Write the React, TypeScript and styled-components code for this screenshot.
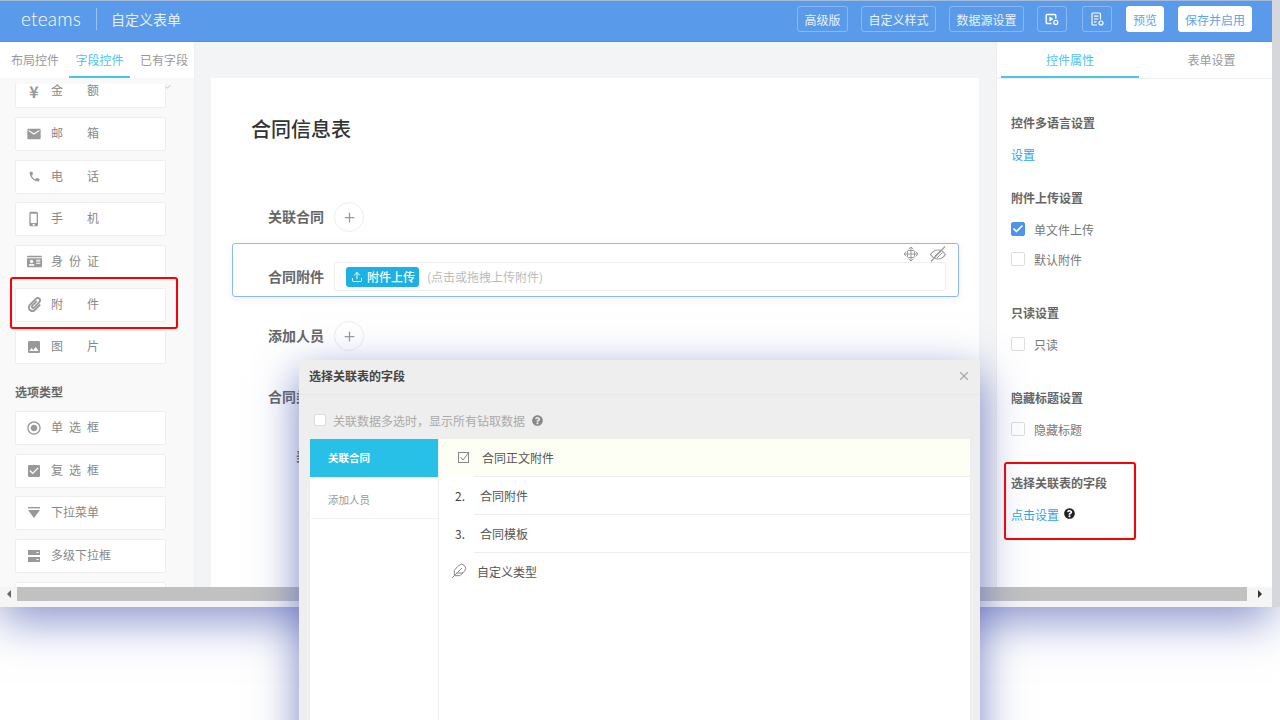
import React, { ReactElement, ReactNode } from 'react';
import styled, { createGlobalStyle } from 'styled-components';
import { FaIdCard, FaPaperclip, FaQuestionCircle } from 'react-icons/fa';
import {
  MdCheckBox,
  MdEmail,
  MdImage,
  MdPhone,
  MdPhoneIphone,
  MdRadioButtonChecked,
} from 'react-icons/md';
import { LuCheck, LuFeather, LuPlus, LuUpload, LuX } from 'react-icons/lu';

const GlobalStyle = createGlobalStyle`
  html, body {
    margin: 0;
    background: #fff;
  }
  * {
    box-sizing: border-box;
  }
  body {
    font-family: "Noto Sans CJK SC", "Noto Sans", sans-serif;
  }
`;

const Page = styled.div`
  position: relative;
  width: 1280px;
  height: 720px;
  overflow: hidden;
  background: #fff;
`;

const WindowFrame = styled.div`
  display: flex;
  height: 607px;
`;

const Main = styled.div`
  display: flex;
  flex-direction: column;
  width: 1272px;
  background: #fff;
  box-shadow: 0 14px 42px rgba(70, 85, 175, 0.62);
`;

const EdgeStrip = styled.div`
  position: relative;
  width: 8px;
  background: #d5d7dc;
`;

const Header = styled.header`
  display: flex;
  align-items: center;
  flex: none;
  height: 42px;
  padding: 0 20px 4px 21px;
  background: #5a9aea;
  border-top: 1px solid #a3bad8;
  border-bottom: 1px solid #4f90e6;
`;

const Logo = styled.div`
  width: 60px;
  font-family: Lato, sans-serif;
  font-size: 19px;
  font-weight: 300;
  line-height: 36px;
  letter-spacing: 0.2px;
  color: #fff;
`;

const HeaderDivider = styled.div`
  width: 1px;
  height: 22px;
  margin: 0 14px 0 15px;
  background: rgba(255, 255, 255, 0.4);
`;

const HeaderTitle = styled.div`
  flex: 1;
  font-size: 14px;
  color: #e6effb;
`;

const HeaderActions = styled.div`
  display: flex;
  gap: 13px;
`;

const HeaderButton = styled.button<{ $solid?: boolean; $width: number; $push?: number }>`
  display: flex;
  align-items: center;
  justify-content: center;
  width: ${(p) => p.$width}px;
  height: 26px;
  margin-left: ${(p) => p.$push ?? 0}px;
  padding: 0;
  font-family: inherit;
  font-size: 12px;
  color: ${(p) => (p.$solid ? '#62a3ee' : '#eaf2fc')};
  background: ${(p) => (p.$solid ? '#fff' : 'transparent')};
  border: 1px solid ${(p) => (p.$solid ? '#fff' : 'rgba(255, 255, 255, 0.3)')};
  border-radius: 3px;
`;

const Workspace = styled.div`
  display: flex;
  flex: 1;
  min-height: 0;
  overflow: hidden;
`;

const LeftPanel = styled.aside`
  display: flex;
  flex-direction: column;
  flex: none;
  width: 195px;
  background: #f9f9f9;
  border-right: 1px solid #f0f0f0;
`;

const TabBar = styled.div<{ $inset: number; $gap: number }>`
  display: flex;
  flex: none;
  gap: ${(p) => p.$gap}px;
  height: 36px;
  padding-left: ${(p) => p.$inset}px;
  background: #fff;
`;

const Tab = styled.div<{ $active?: boolean; $width: number }>`
  width: ${(p) => p.$width}px;
  height: 36px;
  font-size: 12px;
  line-height: 36px;
  text-align: center;
  color: ${(p) => (p.$active ? '#4cc6ee' : '#999')};
  border-bottom: 2px solid ${(p) => (p.$active ? '#45c6ea' : 'transparent')};
`;

const PlainTab = styled(Tab)`
  flex: 1;
  padding-left: 12px;
`;

const ControlScroller = styled.div`
  flex: 1;
  min-height: 0;
  margin-top: 6px;
  padding-left: 15px;
  overflow: hidden;
`;

const ControlList = styled.div`
  margin-top: -9.67px;
`;

const ControlCard = styled.div`
  position: relative;
  display: flex;
  align-items: center;
  gap: 9px;
  width: 151px;
  height: 34px;
  margin-bottom: 8.67px;
  padding-left: 10px;
  background: #fff;
  border: 1px solid #eee;
  border-radius: 2px;
`;

const ControlIcon = styled.span`
  display: flex;
  align-items: center;
  justify-content: center;
  width: 16px;
  font-size: 16px;
  line-height: 12px;
  color: #999;
`;

const YenMark = styled.span`
  font-weight: 700;
`;

const ControlName = styled.span`
  display: inline-block;
  min-width: 48px;
  padding-bottom: 2px;
  font-size: 12px;
  line-height: 12px;
  text-align-last: justify;
  color: #888;
`;

const CardTick = styled.span`
  position: absolute;
  top: 9px;
  right: -6px;
  display: flex;
  font-size: 6px;
  color: #888;
`;

const GroupTitle = styled.div`
  height: 38px;
  font-size: 12px;
  font-weight: 700;
  line-height: 38px;
  color: #666;
`;

const Highlight = styled.div<{ $top: number; $left: number; $width: number; $height: number }>`
  position: absolute;
  top: ${(p) => p.$top}px;
  left: ${(p) => p.$left}px;
  width: ${(p) => p.$width}px;
  height: ${(p) => p.$height}px;
  border: 2px solid #f00;
  border-radius: 3px;
`;

const Canvas = styled.main`
  flex: 1;
  min-width: 0;
  padding: 36px 17px 0 16px;
  background: #f3f4f6;
`;

const FormCard = styled.div`
  height: 700px;
  padding: 36px 20px 0 21px;
  background: #fff;
`;

const FormTitle = styled.h1`
  height: 30px;
  margin: 0 0 0 19px;
  font-size: 20px;
  font-weight: 500;
  line-height: 30px;
  color: #333;
`;

const FieldRow = styled.div<{ $top: number; $indent?: number }>`
  display: flex;
  align-items: center;
  gap: 10px;
  height: 30px;
  margin-top: ${(p) => p.$top}px;
  padding-left: ${(p) => 36 + (p.$indent ?? 0)}px;
`;

const FieldLabel = styled.div`
  flex: none;
  width: 56px;
  padding-bottom: 2px;
  font-size: 14px;
  font-weight: 700;
  line-height: 20px;
  white-space: nowrap;
  color: #666;
`;

const AddCircle = styled.div`
  display: flex;
  align-items: center;
  justify-content: center;
  width: 30px;
  height: 30px;
  font-size: 15px;
  color: #999;
  border: 1px solid #eee;
  border-radius: 50%;
`;

const SelectedField = styled.div`
  position: relative;
  display: flex;
  align-items: flex-start;
  gap: 10px;
  height: 54px;
  margin-top: 11px;
  padding: 18px 12px 0 35px;
  border: 1px solid #8db8f0;
  border-radius: 3px;
  box-shadow: 0 2px 8px rgba(120, 160, 220, 0.15);
`;

const SelectedLabel = styled(FieldLabel)`
  padding-bottom: 0;
  line-height: 29px;
`;

const FieldTools = styled.div`
  position: absolute;
  top: 0;
  right: 11px;
  display: flex;
  align-items: center;
  gap: 10px;
  height: 20px;
  color: #999;
`;

const UploadBox = styled.div`
  display: flex;
  align-items: center;
  flex: 1;
  height: 29px;
  padding-left: 11px;
  border: 1px solid #eee;
  border-radius: 2px;
`;

const UploadButton = styled.div`
  display: flex;
  align-items: center;
  gap: 4px;
  width: 73px;
  height: 20px;
  padding-left: 5px;
  font-size: 12px;
  font-weight: 500;
  color: #fff;
  background: #1cb0e4;
  border-radius: 3px;
`;

const UploadHint = styled.span`
  margin-left: 8px;
  font-size: 12px;
  color: #bbb;
`;

const RightPanel = styled.aside`
  flex: none;
  width: 276px;
  background: #fff;
  border-left: 1px solid #eee;
`;

const RightTabs = styled(TabBar)`
  height: 37px;
  border-bottom: 1px solid #eee;
`;

const PropertyList = styled.div`
  padding: 34px 0 0 14px;
`;

const PropertySection = styled.section<{ $top?: number }>`
  position: relative;
  margin-top: ${(p) => p.$top ?? 0}px;
`;

const PropertyHeading = styled.div`
  font-size: 12px;
  font-weight: 700;
  line-height: 20px;
  color: #666;
`;

const PropertyLink = styled.div`
  display: flex;
  align-items: center;
  gap: 5px;
  margin-top: 12px;
  font-size: 12px;
  line-height: 20px;
  color: #2ea4f0;
`;

const HelpIcon = styled.span<{ $color: string; $raise?: number }>`
  display: flex;
  margin-bottom: ${(p) => p.$raise ?? 0}px;
  font-size: 11px;
  color: ${(p) => p.$color};
`;

const CheckRow = styled.label<{ $top?: number }>`
  display: flex;
  align-items: center;
  gap: 9px;
  height: 20px;
  margin-top: ${(p) => p.$top ?? 12}px;
  padding-bottom: 2px;
  font-size: 12px;
  color: #777;
`;

const CheckBox = styled.span<{ $checked?: boolean; $size?: number }>`
  display: flex;
  align-items: center;
  justify-content: center;
  width: ${(p) => p.$size ?? 14}px;
  height: ${(p) => p.$size ?? 14}px;
  font-size: 12px;
  color: #fff;
  background: ${(p) => (p.$checked ? '#4d94ea' : '#fff')};
  border: 1px solid ${(p) => (p.$checked ? '#4d94ea' : '#ddd')};
  border-radius: 2px;
`;

const ScrollBar = styled.div`
  display: flex;
  flex: none;
  height: 20px;
  padding-bottom: 6px;
  background: #f5f5f5;
`;

const ScrollArrow = styled.div<{ $dir: 'left' | 'right' }>`
  display: flex;
  align-items: center;
  justify-content: center;
  width: ${(p) => (p.$dir === 'left' ? 17 : 25)}px;

  &::before {
    content: '';
    border-top: 4px solid transparent;
    border-bottom: 4px solid transparent;
    border-left: ${(p) => (p.$dir === 'right' ? '4px solid #333' : 'none')};
    border-right: ${(p) => (p.$dir === 'left' ? '4px solid #666' : 'none')};
  }
`;

const ScrollThumb = styled.div`
  flex: 1;
  background: #c1c1c1;
`;

const Modal = styled.div`
  position: absolute;
  top: 360px;
  left: 299px;
  width: 681px;
  height: 420px;
  background: #eee;
  box-shadow: 0 14px 40px rgba(70, 85, 175, 0.72);
`;

const ModalHeader = styled.div`
  display: flex;
  align-items: center;
  justify-content: space-between;
  height: 35px;
  padding: 0 9px 3px 10px;
  border-bottom: 1px solid #e8e8e8;
`;

const ModalTitle = styled.div`
  font-size: 12px;
  font-weight: 700;
  color: #444;
`;

const ModalClose = styled.span`
  display: flex;
  font-size: 14px;
  color: #aaa;
`;

const ModalOption = styled.div`
  display: flex;
  align-items: center;
  gap: 7px;
  height: 44px;
  padding: 6px 0 0 15px;
  font-size: 12px;
  color: #aaa;
`;

const ModalBody = styled.div`
  display: flex;
  margin: 0 10px 0 11px;
  height: 340px;
  background: #fff;
`;

const ModalNav = styled.div`
  flex: none;
  width: 129px;
  border-right: 1px solid #eee;
`;

const ModalNavItem = styled.div<{ $active?: boolean }>`
  height: ${(p) => (p.$active ? 38 : 42)}px;
  padding-left: 18px;
  font-size: 10.5px;
  font-weight: ${(p) => (p.$active ? 700 : 400)};
  line-height: ${(p) => (p.$active ? 38 : 46)}px;
  color: ${(p) => (p.$active ? '#fff' : '#999')};
  background: ${(p) => (p.$active ? '#29c0e8' : '#fff')};
  border-bottom: 1px solid ${(p) => (p.$active ? '#29c0e8' : '#f3f3f3')};
`;

const ModalFields = styled.div`
  flex: 1;
`;

const ModalRow = styled.div<{ $active?: boolean }>`
  display: flex;
  align-items: stretch;
  height: 38px;
  background: ${(p) => (p.$active ? '#fdfff5' : '#fff')};
`;

const RowMarker = styled.div<{ $pad: number }>`
  display: flex;
  align-items: center;
  flex: none;
  width: 35px;
  padding-bottom: 2px;
  padding-left: ${(p) => p.$pad}px;
  font-size: 12px;
  color: #444;
`;

const RowText = styled.div<{ $pad: number; $plain?: boolean }>`
  display: flex;
  align-items: center;
  flex: 1;
  padding-left: ${(p) => p.$pad}px;
  font-size: 12px;
  color: #555;
  border-bottom: 1px solid ${(p) => (p.$plain ? 'transparent' : '#eee')};
`;

const moveIcon = (
  <svg width="16" height="16" viewBox="0 0 16 16" fill="none" stroke="currentColor" strokeWidth="1">
    <path d="M8 1v14M1 8h14" />
    <path d="M5.6 3.2 8 1l2.4 2.2M5.6 12.8 8 15l2.4-2.2M3.2 5.6 1 8l2.2 2.4M12.8 5.6 15 8l-2.2 2.4" />
    <rect x="4.5" y="4.5" width="7" height="7" rx="1" />
  </svg>
);

const hiddenIcon = (
  <svg width="18" height="18" viewBox="0 0 18 18" fill="none" stroke="currentColor" strokeWidth="1.1">
    <path d="M1.5 9.5C3.5 6.5 6 5 9 5s5.5 1.5 7.5 4.5C14.5 12.5 12 14 9 14s-5.5-1.5-7.5-4.5z" />
    <path d="M5.5 11.5 11 6M8 13l5.5-5.5" strokeWidth="1" />
    <path d="M16 1.5 2 16.5" />
  </svg>
);

const dropdownIcon = (
  <svg width="14" height="14" viewBox="0 0 14 14" fill="currentColor">
    <rect x="1" y="1" width="12" height="1.4" />
    <path d="M1 4h12L7 12z" />
  </svg>
);

const cascadeIcon = (
  <svg width="14" height="14" viewBox="0 0 14 14" fill="currentColor">
    <path d="M1 1h12v5H1zM1 8h12v5H1z" />
    <path d="M9.5 3h2v1h-2zM9.5 10h2v1h-2z" fill="#fff" />
  </svg>
);

const tickedIcon = (
  <svg width="12" height="12" viewBox="0 0 12 12" fill="none" stroke="#888" strokeWidth="1">
    <rect x="0.5" y="1.5" width="10" height="10" />
    <path d="M2.5 6 5 9l6-8" />
  </svg>
);

const fileSettingIcon = (
  <svg width="16" height="16" viewBox="0 0 16 16" fill="none" stroke="#fff" strokeWidth="1.4">
    <path d="M7.5 12.5H3.2a1 1 0 0 1-1-1v-7a1 1 0 0 1 1-1h7.6a1 1 0 0 1 1 1v3.3" />
    <path d="M5.8 6v4l3-2z" fill="#fff" strokeWidth="0.8" />
    <circle cx="11.8" cy="11.4" r="2" strokeWidth="1.2" />
  </svg>
);

const listSettingIcon = (
  <svg width="16" height="16" viewBox="0 0 16 16" fill="none" stroke="#fff" strokeWidth="1.2">
    <path d="M8 14H4a1 1 0 0 1-1-1V3a1 1 0 0 1 1-1h6.5a1 1 0 0 1 1 1v5.5" />
    <path d="M5 5.2h4.5M5 8h4.5M5 10.8h2.5" />
    <circle cx="12" cy="12" r="2" />
  </svg>
);

interface Control {
  icon: ReactNode;
  name: string;
}

const valueControls: Control[] = [
  { icon: <YenMark>¥</YenMark>, name: '金额' },
  { icon: <MdEmail />, name: '邮箱' },
  { icon: <MdPhone size={13} />, name: '电话' },
  { icon: <MdPhoneIphone size={16} />, name: '手机' },
  { icon: <FaIdCard size={15} />, name: '身份证' },
  { icon: <FaPaperclip size={15} />, name: '附件' },
  { icon: <MdImage size={16} />, name: '图片' },
];

const optionControls: Control[] = [
  { icon: <MdRadioButtonChecked size={16} />, name: '单选框' },
  { icon: <MdCheckBox size={16} />, name: '复选框' },
  { icon: dropdownIcon, name: '下拉菜单' },
  { icon: cascadeIcon, name: '多级下拉框' },
  { icon: null, name: '' },
];

function ControlItem({ icon, name }: Control): ReactElement {
  return (
    <ControlCard>
      <ControlIcon>{icon}</ControlIcon>
      <ControlName>{name}</ControlName>
      {name === '金额' && (
        <CardTick>
          <LuCheck />
        </CardTick>
      )}
      {name === '附件' && <Highlight $top={-12} $left={-6} $width={168} $height={52} />}
    </ControlCard>
  );
}

function PropertyCheck({ label, checked, top }: { label: string; checked?: boolean; top?: number }): ReactElement {
  return (
    <CheckRow $top={top}>
      <CheckBox $checked={checked}>{checked && <LuCheck strokeWidth={3.5} />}</CheckBox>
      {label}
    </CheckRow>
  );
}

export default function App(): ReactElement {
  return (
    <Page>
      <GlobalStyle />
      <WindowFrame>
        <Main>
          <Header>
            <Logo>eteams</Logo>
            <HeaderDivider />
            <HeaderTitle>自定义表单</HeaderTitle>
            <HeaderActions>
              <HeaderButton $width={51}>高级版</HeaderButton>
              <HeaderButton $width={75}>自定义样式</HeaderButton>
              <HeaderButton $width={75}>数据源设置</HeaderButton>
              <HeaderButton $width={30}>{fileSettingIcon}</HeaderButton>
              <HeaderButton $width={30} $push={2}>
                {listSettingIcon}
              </HeaderButton>
              <HeaderButton $width={38} $solid $push={1}>
                预览
              </HeaderButton>
              <HeaderButton $width={74} $solid $push={1}>
                保存并启用
              </HeaderButton>
            </HeaderActions>
          </Header>
          <Workspace>
            <LeftPanel>
              <TabBar $inset={5} $gap={4}>
                <Tab $width={60}>布局控件</Tab>
                <Tab $width={61} $active>
                  字段控件
                </Tab>
                <Tab $width={60}>已有字段</Tab>
              </TabBar>
              <ControlScroller>
                <ControlList>
                  {valueControls.map((c) => (
                    <ControlItem key={c.name} {...c} />
                  ))}
                  <GroupTitle>选项类型</GroupTitle>
                  {optionControls.map((c) => (
                    <ControlItem key={c.name} {...c} />
                  ))}
                </ControlList>
              </ControlScroller>
            </LeftPanel>
            <Canvas>
              <FormCard>
                <FormTitle>合同信息表</FormTitle>
                <FieldRow $top={58}>
                  <FieldLabel>关联合同</FieldLabel>
                  <AddCircle>
                    <LuPlus />
                  </AddCircle>
                </FieldRow>
                <SelectedField>
                  <FieldTools>
                    {moveIcon}
                    {hiddenIcon}
                  </FieldTools>
                  <SelectedLabel>合同附件</SelectedLabel>
                  <UploadBox>
                    <UploadButton>
                      <LuUpload size={12} />
                      附件上传
                    </UploadButton>
                    <UploadHint>(点击或拖拽上传附件)</UploadHint>
                  </UploadBox>
                </SelectedField>
                <FieldRow $top={24}>
                  <FieldLabel>添加人员</FieldLabel>
                  <AddCircle>
                    <LuPlus />
                  </AddCircle>
                </FieldRow>
                <FieldRow $top={31}>
                  <FieldLabel>合同类型</FieldLabel>
                </FieldRow>
                <FieldRow $top={29} $indent={28}>
                  <FieldLabel>美元</FieldLabel>
                </FieldRow>
              </FormCard>
            </Canvas>
            <RightPanel>
              <RightTabs $inset={4} $gap={0}>
                <Tab $width={138} $active>
                  控件属性
                </Tab>
                <PlainTab $width={132}>表单设置</PlainTab>
              </RightTabs>
              <PropertyList>
                <PropertySection>
                  <PropertyHeading>控件多语言设置</PropertyHeading>
                  <PropertyLink>设置</PropertyLink>
                </PropertySection>
                <PropertySection $top={23}>
                  <PropertyHeading>附件上传设置</PropertyHeading>
                  <PropertyCheck label="单文件上传" checked />
                  <PropertyCheck label="默认附件" top={10} />
                </PropertySection>
                <PropertySection $top={33}>
                  <PropertyHeading>只读设置</PropertyHeading>
                  <PropertyCheck label="只读" />
                </PropertySection>
                <PropertySection $top={33}>
                  <PropertyHeading>隐藏标题设置</PropertyHeading>
                  <PropertyCheck label="隐藏标题" />
                </PropertySection>
                <PropertySection $top={33}>
                  <Highlight $top={-11} $left={-7} $width={132} $height={78} />
                  <PropertyHeading>选择关联表的字段</PropertyHeading>
                  <PropertyLink>
                    点击设置
                    <HelpIcon $color="#222" $raise={3}>
                      <FaQuestionCircle />
                    </HelpIcon>
                  </PropertyLink>
                </PropertySection>
              </PropertyList>
            </RightPanel>
          </Workspace>
          <ScrollBar>
            <ScrollArrow $dir="left" />
            <ScrollThumb />
            <ScrollArrow $dir="right" />
          </ScrollBar>
        </Main>
        <EdgeStrip />
      </WindowFrame>
      <Modal>
        <ModalHeader>
          <ModalTitle>选择关联表的字段</ModalTitle>
          <ModalClose>
            <LuX />
          </ModalClose>
        </ModalHeader>
        <ModalOption>
          <CheckBox $size={12} />
          关联数据多选时，显示所有钻取数据
          <HelpIcon $color="#888">
            <FaQuestionCircle />
          </HelpIcon>
        </ModalOption>
        <ModalBody>
          <ModalNav>
            <ModalNavItem $active>关联合同</ModalNavItem>
            <ModalNavItem>添加人员</ModalNavItem>
          </ModalNav>
          <ModalFields>
            <ModalRow $active>
              <RowMarker $pad={19}>{tickedIcon}</RowMarker>
              <RowText $pad={8}>合同正文附件</RowText>
            </ModalRow>
            <ModalRow>
              <RowMarker $pad={16}>2.</RowMarker>
              <RowText $pad={6}>合同附件</RowText>
            </ModalRow>
            <ModalRow>
              <RowMarker $pad={16}>3.</RowMarker>
              <RowText $pad={6}>合同模板</RowText>
            </ModalRow>
            <ModalRow>
              <RowMarker $pad={12}>
                <LuFeather size={16} color="#888" strokeWidth={1.5} />
              </RowMarker>
              <RowText $pad={3} $plain>
                自定义类型
              </RowText>
            </ModalRow>
          </ModalFields>
        </ModalBody>
      </Modal>
    </Page>
  );
}
